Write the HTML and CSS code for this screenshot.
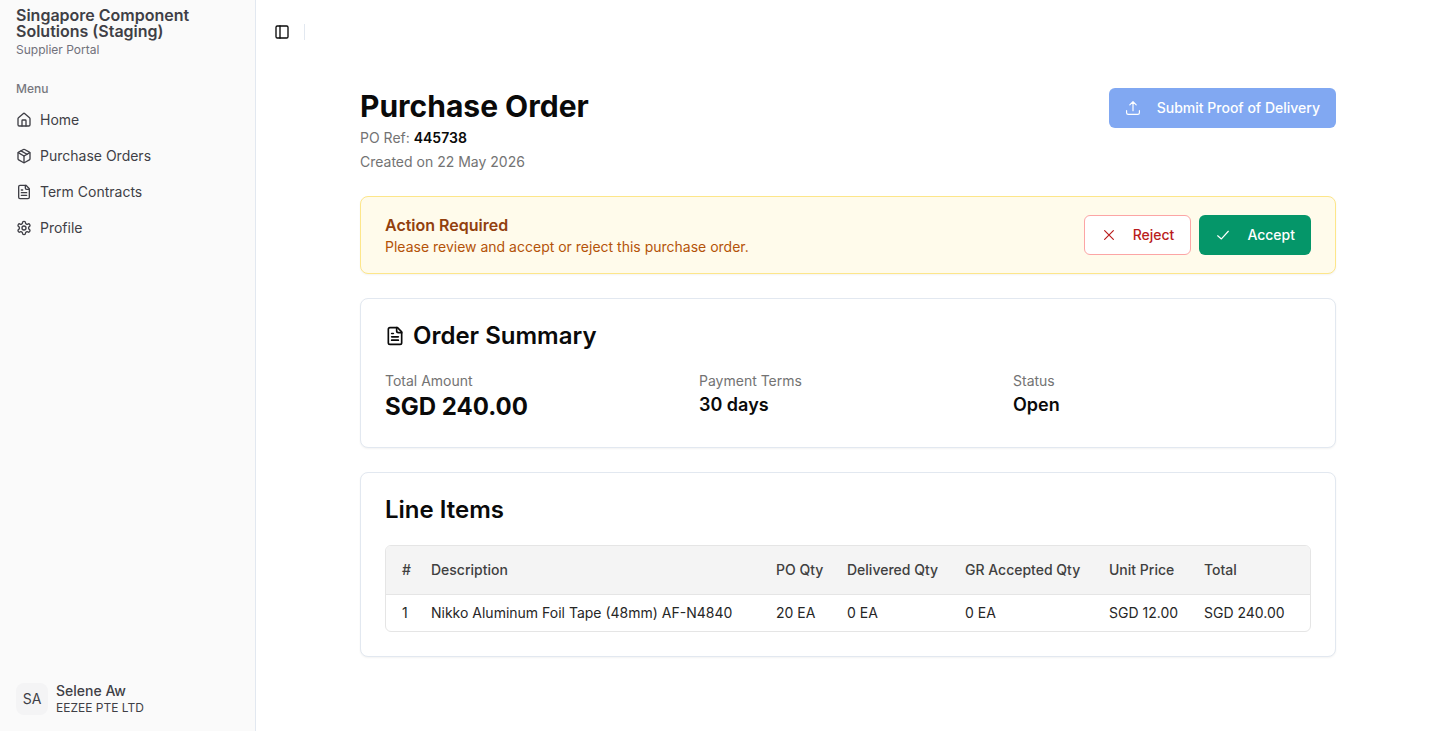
FILE: index.html
```
<!DOCTYPE html>
<html lang="en">
<head>
    <meta charset="UTF-8">
    <meta name="viewport" content="width=device-width, initial-scale=1.0">
    <title>Purchase Order - Supplier Portal</title>
    <link rel="stylesheet" href="styles.css">
</head>
<body>
    <aside class="sidebar">
        <div class="brand">
            <div class="brand-name">Singapore Component Solutions (Staging)</div>
            <div class="brand-sub">Supplier Portal</div>
        </div>
        <nav class="menu">
            <div class="menu-label">Menu</div>
            <a href="#" class="menu-link">
                <svg class="icon" viewBox="0 0 24 24"><path d="M15 21v-8a1 1 0 0 0-1-1h-4a1 1 0 0 0-1 1v8"/><path d="M3 10a2 2 0 0 1 .709-1.528l7-5.999a2 2 0 0 1 2.582 0l7 5.999A2 2 0 0 1 21 10v9a2 2 0 0 1-2 2H5a2 2 0 0 1-2-2z"/></svg>
                Home
            </a>
            <a href="#" class="menu-link">
                <svg class="icon" viewBox="0 0 24 24"><path d="m7.5 4.27 9 5.15"/><path d="M21 8a2 2 0 0 0-1-1.73l-7-4a2 2 0 0 0-2 0l-7 4A2 2 0 0 0 3 8v8a2 2 0 0 0 1 1.73l7 4a2 2 0 0 0 2 0l7-4A2 2 0 0 0 21 16Z"/><path d="m3.3 7 8.7 5 8.7-5"/><path d="M12 22V12"/></svg>
                Purchase Orders
            </a>
            <a href="#" class="menu-link">
                <svg class="icon" viewBox="0 0 24 24"><path d="M15 2H6a2 2 0 0 0-2 2v16a2 2 0 0 0 2 2h12a2 2 0 0 0 2-2V7Z"/><path d="M14 2v4a2 2 0 0 0 2 2h4"/><path d="M10 9H8"/><path d="M16 13H8"/><path d="M16 17H8"/></svg>
                Term Contracts
            </a>
            <a href="#" class="menu-link">
                <svg class="icon" viewBox="0 0 24 24"><path d="M12.22 2h-.44a2 2 0 0 0-2 2v.18a2 2 0 0 1-1 1.73l-.43.25a2 2 0 0 1-2 0l-.15-.08a2 2 0 0 0-2.73.73l-.22.38a2 2 0 0 0 .73 2.73l.15.1a2 2 0 0 1 1 1.72v.51a2 2 0 0 1-1 1.74l-.15.09a2 2 0 0 0-.73 2.73l.22.38a2 2 0 0 0 2.73.73l.15-.08a2 2 0 0 1 2 0l.43.25a2 2 0 0 1 1 1.73V20a2 2 0 0 0 2 2h.44a2 2 0 0 0 2-2v-.18a2 2 0 0 1 1-1.73l.43-.25a2 2 0 0 1 2 0l.15.08a2 2 0 0 0 2.73-.73l.22-.39a2 2 0 0 0-.73-2.73l-.15-.08a2 2 0 0 1-1-1.74v-.5a2 2 0 0 1 1-1.74l.15-.09a2 2 0 0 0 .73-2.73l-.22-.38a2 2 0 0 0-2.73-.73l-.15.08a2 2 0 0 1-2 0l-.43-.25a2 2 0 0 1-1-1.73V4a2 2 0 0 0-2-2z"/><circle cx="12" cy="12" r="3"/></svg>
                Profile
            </a>
        </nav>
        <div class="user">
            <div class="avatar">SA</div>
            <div>
                <div class="user-name">Selene Aw</div>
                <div class="user-company">EEZEE PTE LTD</div>
            </div>
        </div>
    </aside>

    <div class="page">
        <header class="topbar">
            <button type="button" class="toggle" aria-label="Toggle Sidebar">
                <svg class="icon" viewBox="0 0 24 24"><rect width="18" height="18" x="3" y="3" rx="2"/><path d="M9 3v18"/></svg>
            </button>
            <span class="divider"></span>
        </header>

        <main class="content">
            <div class="page-head">
                <div>
                    <h1>Purchase Order</h1>
                    <p class="meta">PO Ref: <strong>445738</strong></p>
                    <p class="meta">Created on 22 May 2026</p>
                </div>
                <button type="button" class="btn btn-submit" disabled>
                    <svg class="btn-icon" viewBox="0 0 15 15"><path d="M4.5 4.5l3-3 3 3M7.5 1.5v8.5M1.5 10v2q0 1.5 1.5 1.5h9q1.5 0 1.5-1.5v-2"/></svg>
                    Submit Proof of Delivery
                </button>
            </div>

            <section class="card notice">
                <div>
                    <h2 class="notice-title">Action Required</h2>
                    <p class="notice-text">Please review and accept or reject this purchase order.</p>
                </div>
                <div class="actions">
                    <button type="button" class="btn btn-reject">
                        <svg class="btn-icon" viewBox="0 0 15 15"><path d="M3.4 3.4l8.2 8.2M11.6 3.4l-8.2 8.2"/></svg>
                        Reject
                    </button>
                    <button type="button" class="btn btn-accept">
                        <svg class="btn-icon" viewBox="0 0 15 15"><path d="M2.5 8.2l3.5 3L12.5 4"/></svg>
                        Accept
                    </button>
                </div>
            </section>

            <section class="card">
                <h2 class="card-title">
                    <svg class="title-icon" viewBox="0 0 24 24"><path d="M15 2H6a2 2 0 0 0-2 2v16a2 2 0 0 0 2 2h12a2 2 0 0 0 2-2V7Z"/><path d="M14 2v4a2 2 0 0 0 2 2h4"/><path d="M10 9H8"/><path d="M16 13H8"/><path d="M16 17H8"/></svg>
                    Order Summary
                </h2>
                <div class="summary">
                    <div>
                        <p class="summary-label">Total Amount</p>
                        <p class="summary-total">SGD 240.00</p>
                    </div>
                    <div>
                        <p class="summary-label">Payment Terms</p>
                        <p class="summary-value">30 days</p>
                    </div>
                    <div>
                        <p class="summary-label">Status</p>
                        <p class="summary-value">Open</p>
                    </div>
                </div>
            </section>

            <section class="card">
                <h2 class="card-title">Line Items</h2>
                <div class="table-wrap">
                    <table>
                        <colgroup>
                            <col class="col-no">
                            <col>
                            <col class="col-qty">
                            <col class="col-delivered">
                            <col class="col-accepted">
                            <col class="col-price">
                            <col class="col-total">
                        </colgroup>
                        <thead>
                            <tr>
                                <th>#</th>
                                <th>Description</th>
                                <th>PO Qty</th>
                                <th>Delivered Qty</th>
                                <th>GR Accepted Qty</th>
                                <th>Unit Price</th>
                                <th>Total</th>
                            </tr>
                        </thead>
                        <tbody>
                            <tr>
                                <td>1</td>
                                <td>Nikko Aluminum Foil Tape (48mm) AF-N4840</td>
                                <td>20 EA</td>
                                <td>0 EA</td>
                                <td>0 EA</td>
                                <td>SGD 12.00</td>
                                <td>SGD 240.00</td>
                            </tr>
                        </tbody>
                    </table>
                </div>
            </section>
        </main>
    </div>
</body>
</html>
```
FILE: styles.css
```
* {
    box-sizing: border-box;
}

body {
    font-family: Inter, "Liberation Sans", sans-serif;
    font-size: 14px;
    line-height: 20px;
    color: #0a0a0a;
    background: #fff;
    margin: 0;
    display: flex;
    min-height: 100vh;
}

h1, h2, p {
    margin: 0;
}

button {
    font: inherit;
    cursor: pointer;
}

.icon, .title-icon, .btn-icon {
    width: 16px;
    height: 16px;
    flex-shrink: 0;
    fill: none;
    stroke: currentColor;
    stroke-width: 2;
    stroke-linecap: round;
    stroke-linejoin: round;
}

/* sidebar */
.sidebar {
    width: 256px;
    flex-shrink: 0;
    display: flex;
    flex-direction: column;
    background: #fafafa;
    border-right: 1px solid #e2e8f0;
    color: #3f3f46;
}

.brand {
    padding: 7px 16px 8px;
}

.brand-name {
    font-size: 16px;
    line-height: 16px;
    font-weight: 600;
}

.brand-sub {
    margin-top: 3px;
    font-size: 12px;
    line-height: 16px;
    color: #71717a;
}

.menu {
    flex: 1;
    padding: 8px;
}

.menu-label {
    height: 30px;
    padding: 0 8px;
    font-size: 12px;
    line-height: 30px;
    font-weight: 500;
    color: #77777e;
}

.menu-link {
    display: flex;
    align-items: center;
    gap: 8px;
    height: 32px;
    margin-bottom: 4px;
    padding: 0 8px;
    border-radius: 6px;
    color: inherit;
    text-decoration: none;
}

.menu-link:hover {
    background: #f4f4f5;
}

.user {
    display: flex;
    align-items: center;
    gap: 8px;
    padding: 15px 16px;
}

.avatar {
    width: 32px;
    height: 32px;
    border-radius: 8px;
    background: #f4f4f5;
    line-height: 32px;
    text-align: center;
}

.user-name {
    line-height: 18px;
    font-weight: 500;
}

.user-company {
    font-size: 12px;
    line-height: 16px;
}

/* main area */
.page {
    flex: 1;
    min-width: 0;
}

.topbar {
    display: flex;
    align-items: center;
    gap: 8px;
    height: 64px;
    padding: 0 12px;
}

.toggle {
    display: flex;
    align-items: center;
    justify-content: center;
    width: 28px;
    height: 28px;
    padding: 0;
    border: none;
    border-radius: 6px;
    background: none;
    color: #0a0a0a;
}

.divider {
    width: 1px;
    height: 16px;
    background: #e2e8f0;
}

.content {
    display: flex;
    flex-direction: column;
    gap: 24px;
    max-width: 1024px;
    margin: 0 auto;
    padding: 24px;
}

.page-head {
    display: flex;
    justify-content: space-between;
    align-items: flex-start;
}

h1 {
    font-size: 30px;
    line-height: 36px;
    font-weight: 700;
}

.meta {
    margin-top: 4px;
    color: #737373;
}

.meta strong {
    font-weight: 600;
    color: #0a0a0a;
}

.btn {
    display: flex;
    align-items: center;
    gap: 16px;
    height: 40px;
    padding: 0 16px;
    border: none;
    border-radius: 6px;
    font-weight: 500;
    white-space: nowrap;
}

.btn-icon {
    stroke-width: 1.1;
}

.btn-submit {
    background: #0554e6;
    color: #fff;
    opacity: 0.5;
}

.btn-reject {
    border: 1px solid #fca5a5;
    background: #fff;
    color: #b91c1c;
}

.btn-accept {
    background: #059669;
    color: #fff;
}

.card {
    padding: 24px;
    border: 1px solid #e2e8f0;
    border-radius: 8px;
    background: #fff;
    box-shadow: 0 1px 2px rgba(0, 0, 0, 0.05);
}

.notice {
    display: flex;
    justify-content: space-between;
    align-items: center;
    padding: 16px 24px;
    border-color: #fde68a;
    background: #fffbeb;
}

.notice-title {
    font-size: 16px;
    line-height: 24px;
    font-weight: 600;
    color: #92400e;
}

.notice-text {
    color: #b45309;
}

.actions {
    display: flex;
    gap: 8px;
}

.card-title {
    display: flex;
    align-items: center;
    gap: 8px;
    margin-bottom: 22px;
    font-size: 24px;
    line-height: 26px;
    font-weight: 600;
}

.title-icon {
    width: 20px;
    height: 20px;
}

.summary {
    display: grid;
    grid-template-columns: repeat(3, 1fr);
    gap: 16px;
}

.summary-label {
    color: #737373;
}

.summary-total {
    font-size: 24px;
    line-height: 32px;
    font-weight: 700;
}

.summary-value {
    font-size: 18px;
    line-height: 28px;
    font-weight: 600;
}

/* line items */
.table-wrap {
    border: 1px solid #e5e5e5;
    border-radius: 6px;
    overflow: hidden;
}

table {
    width: 100%;
    table-layout: fixed;
    border-collapse: collapse;
    text-align: left;
    color: #262626;
}

.col-no {
    width: 29px;
}

.col-qty {
    width: 71px;
}

.col-delivered {
    width: 118px;
}

.col-accepted {
    width: 144px;
}

.col-price {
    width: 95px;
}

.col-total {
    width: 122px;
}

th {
    height: 48px;
    padding: 0 0 0 16px;
    background: #f4f4f4;
    font-weight: 500;
    color: #404040;
}

thead {
    border-bottom: 1px solid #e5e5e5;
}

td {
    padding: 8px 0 8px 16px;
}
```
